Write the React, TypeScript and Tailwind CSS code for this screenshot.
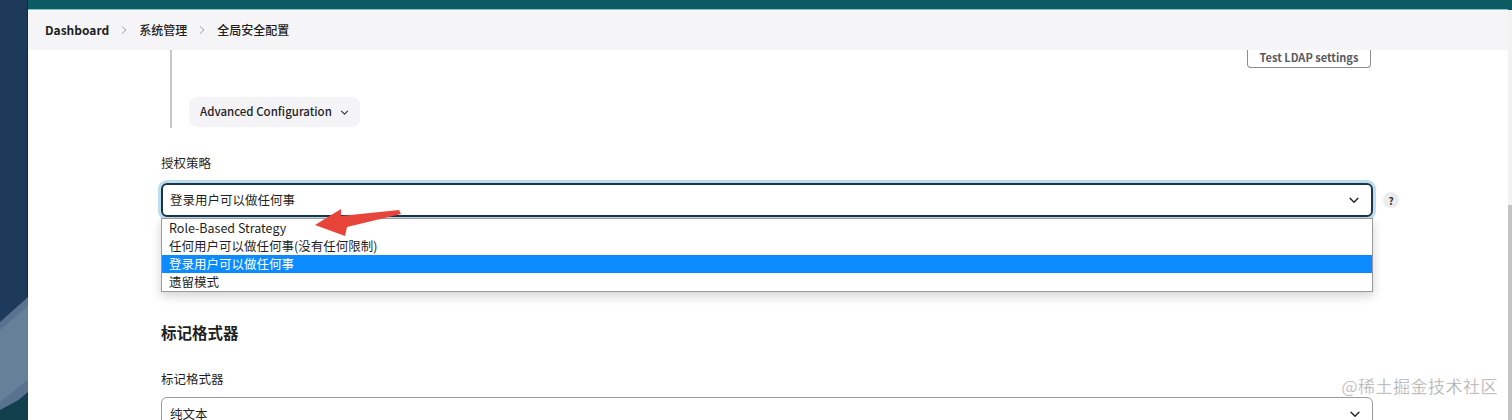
import React from 'react';

const FONT = { fontFamily: '"Noto Sans CJK SC", "Noto Sans", sans-serif' };

const OPTIONS = [
  'Role-Based Strategy',
  '任何用户可以做任何事(没有任何限制)',
  '登录用户可以做任何事',
  '遗留模式',
];

function Chevron({ className }: { className?: string }) {
  return (
    <svg viewBox="0 0 16 16" className={className} fill="none" stroke="currentColor" strokeWidth="1.6" strokeLinecap="round" strokeLinejoin="round">
      <path d="M3.5 6l4.5 4.5L12.5 6" />
    </svg>
  );
}

function Sep() {
  return (
    <svg viewBox="0 0 10 10" className="w-[10px] h-[10px] mx-[10px] text-[#a0a0a8]" fill="none" stroke="currentColor" strokeWidth="1">
      <path d="M3 1.5l4 3.5-4 3.5" />
    </svg>
  );
}

export default function App() {
  return (
    <div className="w-[1512px] h-[420px] flex overflow-hidden bg-white" style={FONT}>
      {/* desktop strip */}
      <div className="w-[28px] shrink-0 relative bg-[#1d3a5b] border-r border-[#14283d]">
        <svg className="absolute left-0 top-0" width="28" height="420" viewBox="0 0 28 420">
          <polygon points="0,322 28,297 28,392 0,416" fill="#587290" />
          <polygon points="0,330 28,306 28,380 0,402" fill="#66809a" />
          <polygon points="0,410 28,395 28,420 0,420" fill="#123f4c" />
        </svg>
      </div>

      <div className="flex-1 flex flex-col min-w-0">
        <div className="h-[9px] bg-[#0c5b62] shrink-0" />
        <div className="h-px bg-[#7fc6c6] shrink-0" />
        <div className="h-[40px] shrink-0 bg-[#f5f5f7] flex items-center pl-[17px] relative z-10 text-[#1f1f24]">
          <span className="text-[12px] font-semibold">Dashboard</span>
          <Sep />
          <span className="text-[12px] font-medium">系统管理</span>
          <Sep />
          <span className="text-[12px] font-medium">全局安全配置</span>
        </div>

        <div className="flex-1 relative pl-[133px] pr-[134px]">
          <div className="w-[1212px]">
            {/* nested LDAP section */}
            <div className="ml-[9px] border-l-2 border-[#c8c8cc] pl-[17px] pb-px">
              <div className="flex justify-end pr-[2px]">
                <button className="h-[20px] -mt-[2px] w-[124px] border border-t-0 border-[#8e8e94] rounded-b-[4px] text-[11px] font-semibold text-[#5a5a60] bg-white leading-none">
                  Test LDAP settings
                </button>
              </div>
              <div className="mt-[29px] inline-flex items-center h-[30px] pl-[11px] pr-[10px] rounded-[8px] bg-[#f4f4f6] text-[11.5px] font-medium text-[#1f1f24] gap-[7px]">
                Advanced Configuration
                <Chevron className="w-[11px] h-[11px] text-[#333]" />
              </div>
            </div>

            {/* authorization strategy */}
            <div className="mt-[26px] text-[12.5px] text-[#1f1f24] leading-[18px]">授权策略</div>
            <div className="mt-[11px] flex items-center relative">
              <div className="w-full h-[34px] rounded-[6px] border-2 border-[#1c3547] ring-[3px] ring-[#bcdcf0] flex items-center pl-[7px] pr-[10px] text-[12.5px] text-[#1f1f24]">
                <span className="flex-1">登录用户可以做任何事</span>
                <Chevron className="w-[14px] h-[14px] text-[#222]" />
              </div>
              <div className="absolute left-[1222px] w-[16px] h-[16px] rounded-full bg-[#ececee] flex items-center justify-center text-[10px] font-bold text-[#333]">?</div>

              <div className="absolute left-0 right-0 top-[35px] bg-white border border-[#9a9a9a] shadow-[0_4px_10px_rgba(0,0,0,0.18)] z-20">
                {OPTIONS.map((o, i) => (
                  <div
                    key={o}
                    className={
                      i === 2
                        ? 'h-[18px] pl-[7px] flex items-center text-[12.5px] bg-[#0b8bff] text-white'
                        : 'h-[18px] pl-[7px] flex items-center text-[12.5px] text-[#1f1f24]'
                    }
                  >
                    {o}
                  </div>
                ))}
              </div>
            </div>

            {/* markup formatter */}
            <div className="mt-[104px] text-[15.5px] font-bold text-[#1f1f24] leading-[22px]">标记格式器</div>
            <div className="mt-[27px] text-[12.5px] text-[#1f1f24] leading-[18px]">标记格式器</div>
            <div className="mt-[9px] h-[34px] rounded-[6px] border border-[#9a9aa0] flex items-center pl-[8px] pr-[10px] text-[12.5px] text-[#1f1f24]">
              <span className="flex-1">纯文本</span>
              <Chevron className="w-[14px] h-[14px] text-[#222]" />
            </div>
          </div>

          {/* red annotation arrow */}
          <svg className="absolute left-0 top-0 pointer-events-none z-30" width="420" height="200" viewBox="29 50 420 200">
            <polygon points="316,225 342,209 342,216 400,210 402,214 348,227 346,236" fill="#e8443a" />
          </svg>

          {/* watermark */}
          <div className="absolute right-[10px] top-[323px] text-[17px] text-[#a6a6a6] tracking-[0.5px] z-30" style={{ WebkitTextStroke: '0.3px #fff' }}>
            @稀土掘金技术社区
          </div>
        </div>
      </div>

      {/* scrollbar */}
      <div className="w-[4px] shrink-0 flex flex-col">
        <div className="h-[10px] bg-[#0c5b62]" />
        <div className="h-[195px] bg-[#f2f2f2]" />
        <div className="flex-1 bg-[#c4c4c4]" />
      </div>
    </div>
  );
}
